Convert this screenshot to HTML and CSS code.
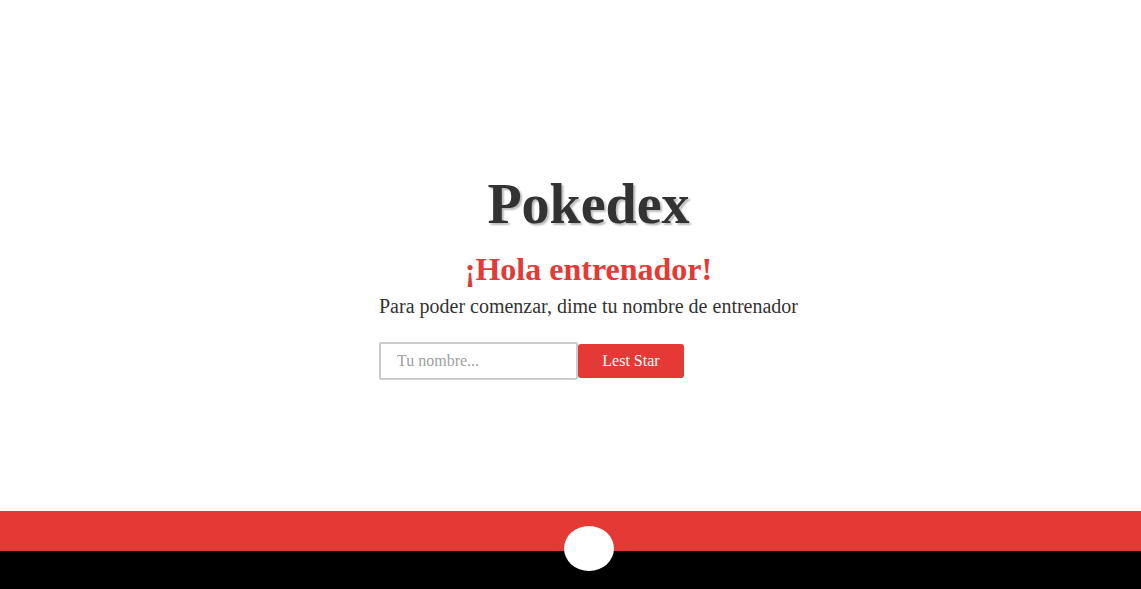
FILE: index.html
```html
<!DOCTYPE html>
<html lang="es">
<head>
<meta charset="utf-8">
<title>Pokedex</title>
<link rel="stylesheet" href="styles.css">
</head>
<body>
<main class="hero">
  <div class="intro">
    <h1 class="title">Pokedex</h1>
    <h2 class="greeting">¡Hola entrenador!</h2>
    <p class="lead">Para poder comenzar, dime tu nombre de entrenador</p>
    <form class="start-form">
      <input class="name-input" type="text" placeholder="Tu nombre...">
      <button class="start-btn" type="button">Lest Star</button>
    </form>
  </div>
</main>
<footer class="pokeball">
  <div class="band-red"></div>
  <div class="band-black"></div>
  <div class="ball-center"></div>
</footer>
</body>
</html>
```
FILE: styles.css
```css
html, body {
  margin: 0;
  padding: 0;
}
body {
  height: 100vh;
  display: flex;
  flex-direction: column;
  font-family: "Liberation Serif", "Times New Roman", serif;
  color: #333;
  background: #fff;
  overflow: hidden;
}
.hero {
  flex: 1;
  display: flex;
  justify-content: center;
  align-items: flex-start;
  padding-left: 36px;
  padding-top: 172px;
}
.intro {
  display: flex;
  flex-direction: column;
  align-items: center;
  text-align: center;
}
.title {
  margin: 0;
  font-size: 56px;
  line-height: 64px;
  font-weight: bold;
  color: #333;
  text-shadow: 2px 2px 2px #bbb;
}
.greeting {
  margin: 15px 0 0;
  font-size: 32px;
  line-height: 36px;
  font-weight: bold;
  color: #e53935;
}
.lead {
  margin: 7px 0 0;
  font-size: 20px;
  line-height: 24px;
  color: #333;
}
.start-form {
  align-self: stretch;
  display: flex;
  align-items: center;
  margin: 24px 0 0;
}
.name-input {
  box-sizing: border-box;
  width: 199px;
  height: 38px;
  border: 2px solid #ccc;
  border-radius: 2px;
  padding: 0 16px;
  font-family: "Liberation Serif", "Times New Roman", serif;
  font-size: 16px;
  color: #333;
  outline: none;
}
.name-input::placeholder {
  color: #a0a0a0;
}
.start-btn {
  box-sizing: border-box;
  width: 106px;
  height: 34px;
  border: none;
  border-radius: 3px;
  background: #e53935;
  color: #fff;
  font-family: "Liberation Serif", "Times New Roman", serif;
  font-size: 16px;
  cursor: pointer;
}
.pokeball {
  position: relative;
  height: 78px;
  display: flex;
  flex-direction: column;
}
.band-red {
  height: 40px;
  background: #e53935;
}
.band-black {
  flex: 1;
  background: #000;
}
.ball-center {
  position: absolute;
  left: 564px;
  top: 15px;
  width: 50px;
  height: 45px;
  border-radius: 50%;
  background: #fff;
}
```
